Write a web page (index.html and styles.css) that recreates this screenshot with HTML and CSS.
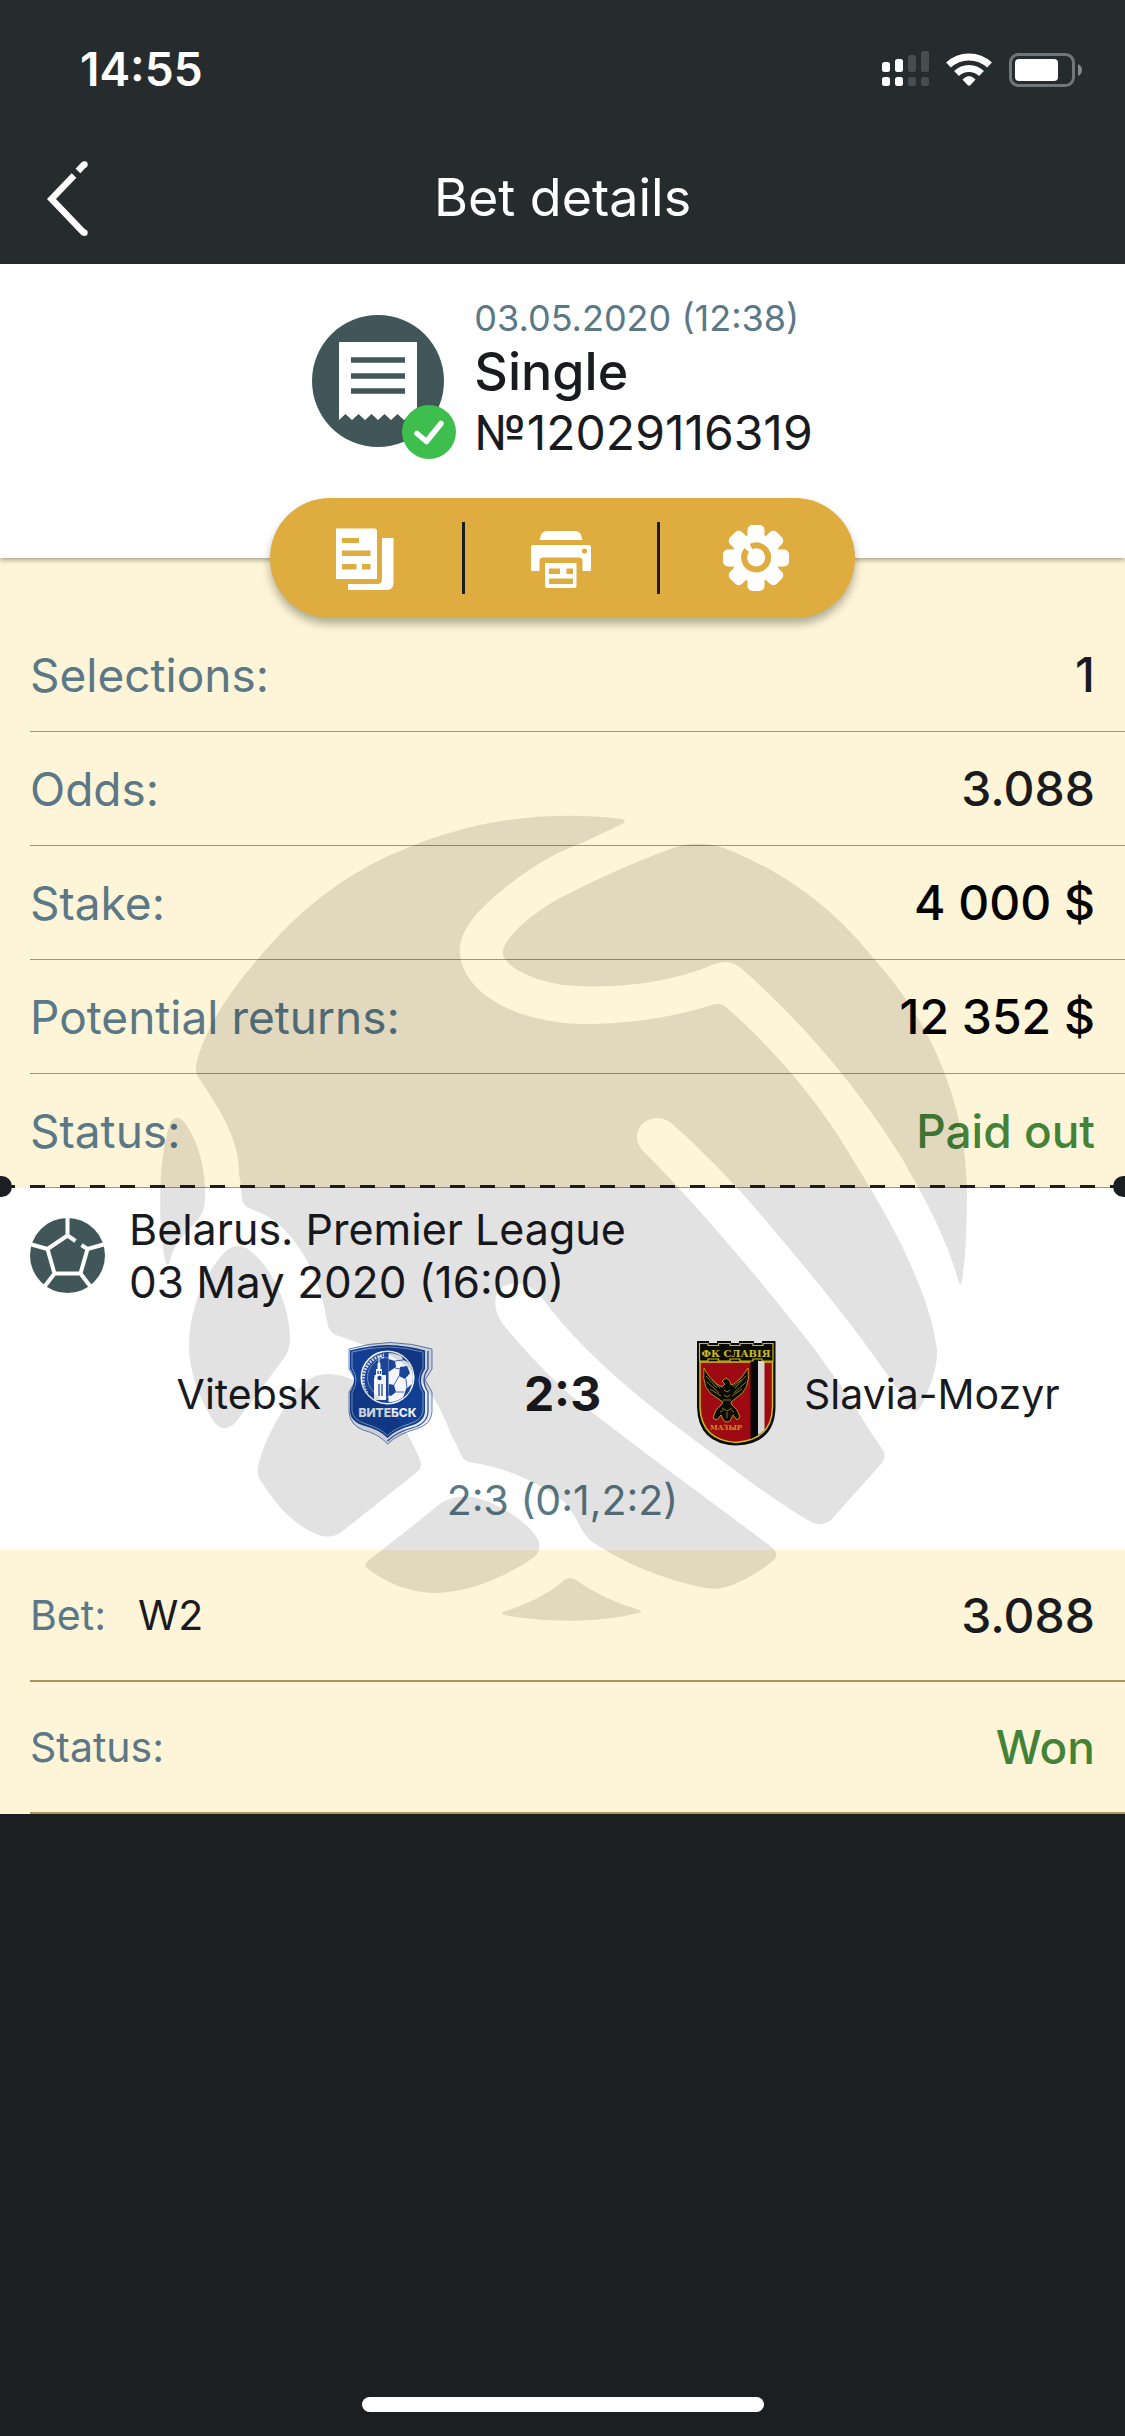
FILE: index.html
```html
<!DOCTYPE html>
<html lang="en">
<head>
<meta charset="utf-8">
<meta name="viewport" content="width=device-width, initial-scale=1">
<title>Bet details</title>
<link rel="stylesheet" href="styles.css">
</head>
<body>
<header class="top">
  <div class="status-bar">
    <span class="clock">14:55</span>
    <svg class="status-icons" viewBox="882 50 200 36" aria-hidden="true">
      <g fill="#fff">
        <rect x="882" y="61" width="8" height="10" rx="2.500"/>
        <rect x="882" y="76" width="8" height="9" rx="2.500"/>
        <rect x="895" y="58" width="8" height="13" rx="2.500"/>
        <rect x="895" y="76" width="8" height="9" rx="2.500"/>
      </g>
      <g fill="#474d50">
        <rect x="908" y="54" width="8" height="17" rx="2.500"/>
        <rect x="908" y="76" width="8" height="9" rx="2.500"/>
        <rect x="921" y="50" width="8" height="21" rx="2.500"/>
        <rect x="921" y="76" width="8" height="9" rx="2.500"/>
      </g>
      <g fill="none" stroke="#fff" stroke-width="7">
        <path d="M948.500 64A30 30 0 0 1 989.500 64"/>
        <path d="M956.500 72.500A18 18 0 0 1 981.500 72.500"/>
      </g>
      <path d="M962.500 78.500Q969 71.500 975.500 78.500L970.500 84Q969 85.500 967.500 84Z" fill="#fff"/>
      <rect x="1010.500" y="53.500" width="63" height="31" rx="8" fill="none" stroke="#70777a" stroke-width="3"/>
      <rect x="1015" y="58" width="43" height="22" rx="4" fill="#fff"/>
      <path d="M1078 63Q1082 65 1082 69T1078 75Z" fill="#85898b"/>
    </svg>
  </div>
  <nav class="nav-bar">
    <button class="back" type="button" aria-label="Back">
      <svg viewBox="46 158 44 79" aria-hidden="true">
        <path d="M74 174.500L51.500 198L84 232" fill="none" stroke="#fff" stroke-width="6.500"/>
        <path d="M78 170L84 163.500" fill="none" stroke="#fff" stroke-width="6.500"/>
        <circle cx="84.500" cy="163.500" r="3.200" fill="#fff"/>
        <circle cx="84.500" cy="231.800" r="3.200" fill="#fff"/>
      </svg>
    </button>
    <h1 class="title">Bet details</h1>
  </nav>
</header>

<main class="details">
  <section class="ticket">
    <svg class="ticket-icon" viewBox="311 315 144 144" aria-hidden="true">
      <circle cx="377" cy="381" r="66" fill="#405658"/>
      <path d="M338 342H416V420L409.500 414L403 420L396.500 414L390 420L383.500 414L377 420L370.500 414L364 420L357.500 414L351 420L344.500 414L338 420Z" fill="#fff"/>
      <path d="M350 360H404M350 376H404M350 391H404" stroke="#405658" stroke-width="5.500"/>
      <circle cx="428" cy="432" r="27" fill="#3ebf4d"/>
      <path d="M416 433.500L425.500 441.500L440 423.500" fill="none" stroke="#fff" stroke-width="5.500" stroke-linecap="round" stroke-linejoin="round"/>
    </svg>
    <div class="ticket-text">
      <time class="ticket-date" datetime="2020-05-03T12:38">03.05.2020 (12:38)</time>
      <h2 class="ticket-type">Single</h2>
      <p class="ticket-number">№12029116319</p>
    </div>
  </section>

  <div class="toolbar">
    <button class="tool" type="button" aria-label="Copy">
      <svg class="tool-icon" viewBox="333 525 66 66" aria-hidden="true">
        <path d="M336 528.500H375Q377 528.500 377 531V579H336Z" fill="#fff"/>
        <path d="M342 538H359V543H342ZM342 550.500H370.500V556H342ZM342 564H356.500V569.500H342ZM362 564H370.500V569.500H362Z" fill="#deac3f"/>
        <path d="M382 538H393.500V583Q393.500 590 386.500 590H348V584H377.500Q382 584 382 579Z" fill="#fff"/>
      </svg>
    </button>
    <button class="tool" type="button" aria-label="Print">
      <svg class="tool-icon" viewBox="528 525 66 66" aria-hidden="true">
        <path d="M539.500 540L541 535Q543 531 547 531H575Q579 531 581 535L582.500 540Z" fill="#fff"/>
        <path d="M533 545H589Q591 545 591 547V570Q591 571 590 571H582.500V561Q582.500 557.500 579 557.500H543Q539.500 557.500 539.500 561V571H532Q531 571 531 570V547Q531 545 533 545Z" fill="#fff"/>
        <circle cx="584.500" cy="551" r="2.600" fill="#deac3f"/>
        <path d="M545 563H576.500V586Q576.500 588 574.500 588H547Q545 588 545 586Z" fill="#fff"/>
        <path d="M549 568.500H560V574H549ZM566.500 568.500H573V574H566.500ZM549 578.500H573V584H549Z" fill="#deac3f"/>
      </svg>
    </button>
    <button class="tool" type="button" aria-label="Settings">
      <svg class="tool-icon" viewBox="723 525 66 66" aria-hidden="true">
        <g fill="#fff">
          <rect x="747.500" y="525" width="17" height="66" rx="5"/>
          <rect x="747.500" y="525" width="17" height="66" rx="5" transform="rotate(45 756 558)"/>
          <rect x="747.500" y="525" width="17" height="66" rx="5" transform="rotate(90 756 558)"/>
          <rect x="747.500" y="525" width="17" height="66" rx="5" transform="rotate(135 756 558)"/>
          <circle cx="756" cy="558" r="24"/>
        </g>
        <path d="M751 546.500A12 12 0 1 1 746.800 549.800" fill="none" stroke="#deac3f" stroke-width="6"/>
        <path d="M744 545L751 552" stroke="#fff" stroke-width="3"/>
      </svg>
    </button>
  </div>

  <dl class="summary">
    <div class="row"><dt>Selections:</dt><dd>1</dd></div>
    <div class="row"><dt>Odds:</dt><dd>3.088</dd></div>
    <div class="row"><dt>Stake:</dt><dd class="money">4 000 $</dd></div>
    <div class="row"><dt>Potential returns:</dt><dd class="money">12 352 $</dd></div>
    <div class="row"><dt>Status:</dt><dd class="good">Paid out</dd></div>
  </dl>

  <section class="match">
    <div class="perforation"></div>
    <div class="match-head">
      <svg class="ball" viewBox="30 1218 75 75" aria-hidden="true">
        <circle cx="67.500" cy="1255.500" r="37.500" fill="#405658"/>
        <g fill="none" stroke="#fff" stroke-width="4">
          <path d="M67.500 1217V1235.500M31.500 1244.500L47.500 1249M47.500 1249L67.500 1235.500L75.500 1241M81.500 1245L87.500 1249L80.500 1273.500H54.500L47.500 1249M87.500 1249L103.500 1244.500M80.500 1273.500L90 1286M54.500 1273.500L45 1286"/>
        </g>
      </svg>
      <div class="match-text">
        <h2>Belarus. Premier League</h2>
        <time datetime="2020-05-03T16:00">03 May 2020 (16:00)</time>
      </div>
    </div>
    <div class="teams">
      <div class="team team-home">
        <span>Vitebsk</span>
        <svg class="crest" viewBox="-4 -1 90 105" role="img" aria-label="Vitebsk crest">
          <path d="M0 7Q20 1 41 .500Q63 1 83 7V27L76 38L83 50V70Q82 83 67 87Q49 92 38.500 102Q30 92 14 88Q1 83 0 70V50L7 38L0 27Z" fill="#e6ebf4" stroke="#2c4f95" stroke-width=".700"/>
          <path d="M1 8.500Q19 3.500 39 3Q59 3.500 76 8.500V27Q68 38 76 50V70Q75 80 61 84Q46 88 38.500 96Q31 88 16 84Q2 80 1 70V50Q9 38 1 27Z" fill="#123f94"/>
          <path d="M79 9V27Q71 38 79 50V70Q78 82 63 86Q48 90 38.500 99" fill="none" stroke="#2c4f95" stroke-width="1.200"/>
          <path d="M3 10Q20 5.500 39 5Q58 5.500 74 10V26Q66 38 74 51V69Q73 78 60 82Q46 86 38.500 93.500Q31 86 17 82Q4 78 3 69V51Q11 38 3 26Z" fill="none" stroke="#a9bbdd" stroke-width=".700"/>
          <circle cx="38.500" cy="35.500" r="27" fill="#fff"/>
          <circle cx="38.500" cy="35.500" r="25.500" fill="#1c459a"/>
          <circle cx="38.500" cy="35.500" r="20" fill="none" stroke="#8ea5d2" stroke-width=".700"/>
          <path d="M39.500 11A24.500 24.500 0 0 1 39.500 60Z" fill="#f4f6fb"/>
          <path d="M39.500 17L46 19L47 25L39.500 30ZM51 25L58 24L61 31L56 37L50 34ZM53 14L59 20L54 18ZM40 42L45 43L47 50L42 54L39.500 53ZM57 47L63 42L60 50L54 56Z" fill="#1c459a"/>
          <path d="M46 26L51 27M50 34L45 43M57 37L58 47M47 50L55 50M46 19L54 18" stroke="#1c459a" stroke-width=".800"/>
          <path d="M25 58V36H25.500V33H27V27H28.500V22L30 18.500L31.500 22V27H33V33H37V58Z" fill="#f4f6fb"/>
          <circle cx="30.500" cy="36" r="2.200" fill="#1c459a"/>
          <path d="M30 42V54M33 42V54M29 29V32M31.500 29V32" stroke="#1c459a" stroke-width="1.300"/>
          <path d="M30 19V14L35 16" fill="none" stroke="#fff"/>
          <path d="M18 51A25 25 0 0 1 35 13" fill="none" stroke="#cdd8ee" stroke-width="3" stroke-dasharray="1.800 1.200"/>
          <text x="38.500" y="75" text-anchor="middle" class="crest-name">ВИТЕБСК</text>
        </svg>
      </div>
      <strong class="score">2:3</strong>
      <div class="team team-away">
        <svg class="crest" viewBox="-7 0 90 105" role="img" aria-label="Slavia-Mozyr crest">
          <path d="M0 0H12V2H20V0H34V2H42V0H57V2H65V0H78.500V66Q78 103 39 104.500Q1 103 0 66Z" fill="#0c0c06"/>
          <path d="M3 21H75.500V66Q75 99 39 101.500Q4 99 3 66Z" fill="#b30c14" stroke="#e5d71c" stroke-width="1.500"/>
          <path d="M53.500 20H61V94L53.500 98Z" fill="#090909"/>
          <path d="M61 20H67.500V89L61 94Z" fill="#f5f3f2"/>
          <path d="M2.500 2.500H11V4.500H21.500V2.500H33V4.500H43V2.500H56V4.500H66V2.500H76V20H65V18H56V20H43V18H33V20H21.500V18H11V20H2.500Z" fill="#0c0c06" stroke="#e5d71c" stroke-width="1.200"/>
          <path d="M7 27Q4 49 20 57L26 61L24 64L19 69L16 77L20 79L24 74L27 80L30 81L33 80L36 74L40 79L43 76L40 69L35 64L34 61L39 57Q54 49 51 27Q45 38 37 43L34 44L33 40L29 37L25 40L28 43L25 46Q14 41 7 27Z" fill="#0c0c06" stroke="#d8b51c" stroke-width=".900"/>
          <path d="M9 35L20 47M10 41L22 52M13 48L24 55M49 35L38 47M49 41L37 52M45 48L35 55M15 39L23 47M44 39L36 46M27 49L30 51L33 49M27 54L30 56L33 54M26 59H34M25 67L30 70L35 67M23 71L26 69M37 71L34 69M30 71V77" fill="none" stroke="#a5902b" stroke-width=".900"/>
          <text x="39" y="15.500" text-anchor="middle" class="slavia-top">ФК СЛАВІЯ</text>
          <text x="29" y="89" text-anchor="middle" class="slavia-town">МАЗЫР</text>
        </svg>
        <span>Slavia-Mozyr</span>
      </div>
    </div>
    <p class="periods">2:3 (0:1,2:2)</p>
  </section>

  <dl class="bet">
    <div class="bet-row"><dt>Bet:</dt><dd class="pick">W2</dd><dd class="bet-value">3.088</dd></div>
    <div class="bet-row"><dt>Status:</dt><dd class="bet-value good">Won</dd></div>
  </dl>

  <svg class="watermark" viewBox="159 815 809 809" aria-hidden="true">
    <path d="M622 819Q628 821 622 824L584 842C556 852 528 868 495 896C472 916 458 935 460 954C463 990 510 1022 582 1024C628 1024 670 1018 712 1005Q721 1002 727 1008C775 1050 823 1107 853 1160C880 1203 900 1240 907 1257Q932 1310 937 1350Q938 1372 921 1406Q916 1415 910 1408C860 1331 795 1254 742 1193C715 1164 695 1144 670 1122C655 1112 637 1122 637 1137C637 1147 645 1153 652 1160C700 1209 756 1275 813 1347L849 1397C865 1424 876 1440 883 1450Q887 1457 881 1464L830 1521Q821 1527 811 1522C768 1497 726 1463 697 1442C640 1399 598 1364 562 1323L541 1297C527 1279 503 1279 496 1296Q493 1309 502 1323C530 1357 560 1389 598 1417L652 1458L773 1548Q779 1555 774 1560Q751 1579 726 1587Q717 1590 706 1588C659 1579 617 1559 591 1541C578 1530 578 1515 562 1500C535 1481 508 1468 469 1462C460 1460 459 1446 452 1437C436 1390 407 1359 373 1348L336 1335C327 1331 328 1323 326 1316C319 1272 292 1228 265 1215L247 1207C239 1201 243 1190 239 1175C240 1143 224 1116 201 1081Q195 1074 196 1065C204 1030 230 991 258 959C302 906 350 870 412 846C475 820 548 810 622 819Z"/>
    <path d="M670 849Q702 837 734 852C790 876 835 910 874 959C934 1025 966 1107 967 1190Q967 1249 962 1280Q960 1289 958 1279C942 1227 923 1196 903 1160C872 1110 823 1041 741 968Q727 958 712 965C665 985 607 989 562 985C531 979 509 969 503 955C500 941 530 914 562 897Q616 869 670 849Z"/>
    <path d="M169 1127C172 1116 179 1115 185 1123C199 1143 205 1168 205 1193Q206 1207 200 1217C178 1241 173 1247 170 1262Q167 1268 165 1260C158 1223 158 1163 169 1127Z"/>
    <path d="M226 1251Q236 1242 248 1249C275 1270 290 1308 290 1340Q290 1350 284 1358L258 1393L236 1422Q224 1434 214 1422C198 1397 188 1367 189 1343C190 1309 204 1273 226 1251Z"/>
    <path d="M308 1380Q323 1369 349 1378C384 1393 407 1428 420 1460Q423 1468 416 1473L340 1533Q328 1540 314 1533C290 1522 275 1503 259 1478C251 1463 285 1397 308 1380Z"/>
    <path d="M441 1503Q457 1494 473 1497C502 1504 533 1526 539 1542Q541 1554 530 1560Q482 1591 437 1593C411 1593 386 1583 367 1568Q363 1565 369 1560L410 1528Z"/>
    <path d="M562 1582Q569 1575 576 1580Q602 1599 639 1610Q644 1612 638 1613C600 1623 543 1623 505 1615Q499 1613 506 1611C524 1605 546 1596 562 1582Z"/>
  </svg>
</main>

<div class="home-indicator"></div>
</body>
</html>
```

FILE: styles.css
```css
* {
  box-sizing: border-box;
}

body {
  margin: 0;
  min-height: 100vh;
  display: flex;
  flex-direction: column;
  background: #1b1f22;
  color: #191b1f;
  font-family: Inter, "Liberation Sans", sans-serif;
}

h1,
h2,
p,
dl,
dd {
  margin: 0;
  font-weight: 400;
}

svg {
  display: block;
  flex: none;
}

button {
  padding: 0;
  border: 0;
  background: none;
  cursor: pointer;
}

/* Header */

.top {
  background: #262c2e;
  color: #fff;
}

.status-bar {
  display: flex;
  align-items: center;
  justify-content: space-between;
  height: 132px;
  padding: 6px 43px 0 80px;
}

.clock {
  font-size: 46px;
  font-weight: 600;
}

.status-icons {
  width: 200px;
  height: 36px;
}

.nav-bar {
  display: grid;
  grid-template-columns: 1fr auto 1fr;
  align-items: center;
  height: 132px;
  padding: 0 46px;
}

.back {
  justify-self: start;
}

.back svg {
  width: 44px;
  height: 79px;
}

.title {
  font-size: 52px;
  line-height: 60px;
}

/* Ticket */

.details {
  position: relative;
  background: #fef4d7;
}

.ticket {
  display: flex;
  align-items: flex-start;
  justify-content: center;
  gap: 18px;
  height: 294px;
  padding-top: 30px;
  background: #fff;
  box-shadow: 0 2px 5px rgba(0, 0, 0, 0.35);
}

.ticket-icon {
  width: 144px;
  height: 144px;
  margin-top: 21px;
}

.ticket-date {
  display: block;
  color: #5a7885;
  font-size: 36px;
  line-height: 48px;
}

.ticket-type {
  font-size: 52px;
  font-weight: 500;
  line-height: 60px;
}

.ticket-number {
  font-size: 48px;
  line-height: 62px;
}

/* Toolbar */

.toolbar {
  position: relative;
  display: flex;
  width: 585px;
  height: 120px;
  margin: -60px auto 0;
  border-radius: 60px;
  background: #deac3f;
  box-shadow: 0 6px 8px rgba(60, 70, 50, 0.4);
}

.tool {
  position: relative;
  display: flex;
  flex: 1;
  align-items: center;
  justify-content: center;
  padding-right: 3px;
}

.tool + .tool::before {
  content: "";
  position: absolute;
  left: -3px;
  width: 3px;
  height: 72px;
  background: #1b1e21;
}

.tool-icon {
  width: 66px;
  height: 66px;
}

/* Summary */

.row {
  display: flex;
  align-items: center;
  justify-content: space-between;
  height: 114px;
  margin-left: 30px;
  padding-right: 30px;
  border-bottom: 1px solid #a9965a;
  font-size: 46px;
}

dt {
  color: #5a7885;
}

.row dd {
  font-size: 48px;
  font-weight: 500;
}

.row .money {
  color: #000;
}

.row .good,
.bet-row .good {
  color: #448337;
  font-size: 46px;
}

/* Match */

.match {
  position: relative;
  padding: 15px 30px 20px;
  background: #fff;
}

.perforation {
  position: absolute;
  top: -3px;
  left: 0;
  right: 0;
  height: 3px;
  background: repeating-linear-gradient(90deg, #1b1f22 0 15px, transparent 15px 30px);
}

.perforation::before,
.perforation::after {
  content: "";
  position: absolute;
  top: -9px;
  width: 21px;
  height: 21px;
  border-radius: 50%;
  background: #1b1f22;
}

.perforation::before {
  left: -9px;
}

.perforation::after {
  right: -9px;
  clip-path: inset(0 9px 0 0);
}

.match-head {
  display: flex;
  gap: 24px;
  font-size: 44px;
  line-height: 53px;
}

.match-head h2 {
  font-size: 43px;
}

.ball {
  width: 75px;
  height: 75px;
  margin-top: 15px;
}

.teams {
  display: grid;
  grid-template-columns: 1fr 255px 1fr;
  align-items: center;
  margin-top: 32px;
}

.team {
  display: flex;
  align-items: center;
  gap: 24px;
  font-size: 41px;
}

.team-home {
  justify-content: flex-end;
}

.crest {
  width: 90px;
  height: 105px;
}

.crest-name {
  fill: #e8edf6;
  font-family: Inter, sans-serif;
  font-size: 12px;
  font-weight: 800;
}

.slavia-top {
  fill: #e5d71c;
  font-family: "DejaVu Serif", serif;
  font-size: 10px;
  font-weight: 700;
}

.slavia-town {
  fill: #e3a51c;
  font-family: "DejaVu Serif", serif;
  font-size: 7px;
  font-weight: 700;
}

.score {
  font-size: 48px;
  font-weight: 700;
  text-align: center;
}

.periods {
  margin-top: 24px;
  color: #5a7885;
  font-size: 41px;
  line-height: 60px;
  text-align: center;
}

/* Bet */

.bet-row {
  display: flex;
  align-items: center;
  height: 132px;
  margin-left: 30px;
  padding-right: 30px;
  border-bottom: 2px solid #a9965a;
  font-size: 41px;
}

.pick {
  margin-left: 32px;
}

.bet-value {
  margin-left: auto;
  font-size: 48px;
  font-weight: 500;
}

.watermark {
  position: absolute;
  top: 551px;
  left: 50%;
  width: 809px;
  height: 809px;
  margin-left: -404px;
  fill: #000;
  opacity: 0.11;
  pointer-events: none;
}

.home-indicator {
  width: 402px;
  height: 15px;
  margin: auto auto 24px;
  border-radius: 8px;
  background: #fff;
}
```
